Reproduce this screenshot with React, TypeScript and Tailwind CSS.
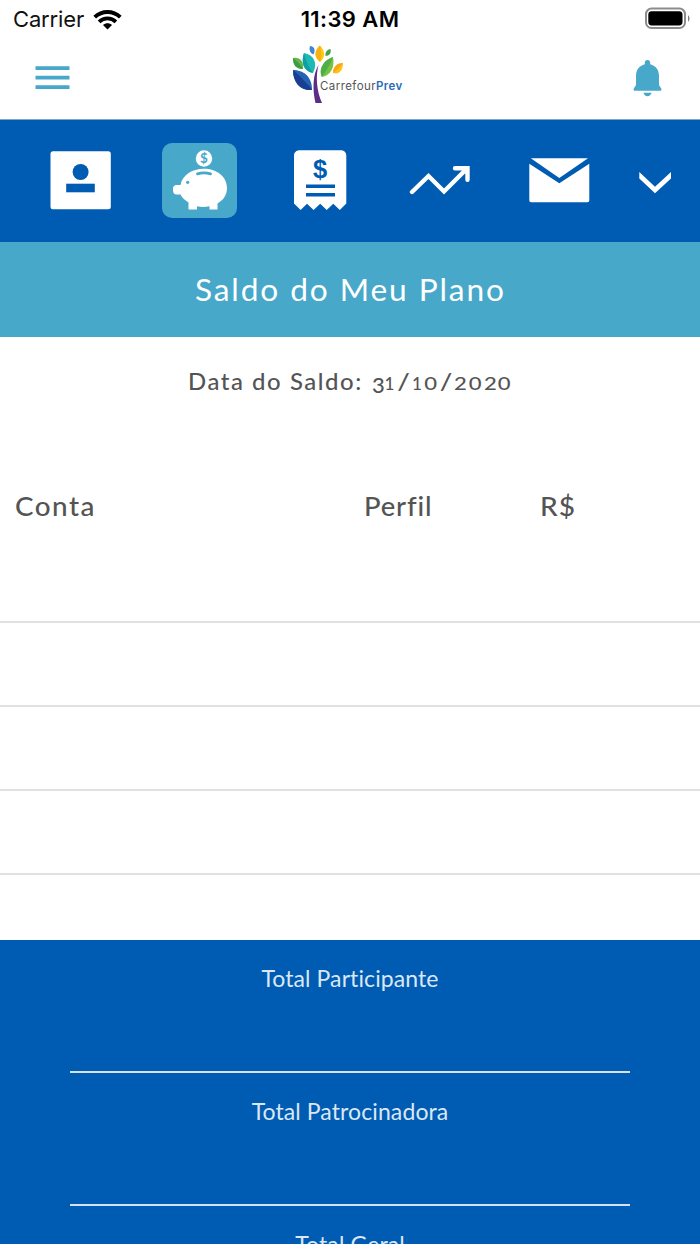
import React from "react";

function Tree() {
  return (
    <svg className="h-[60px] w-[54px] shrink-0" viewBox="291 45 54 60">
      <path d="M293 70C303 70 312 76 312 90C301 91 293 83 293 70Z" fill="#2462b4" />
      <path d="M293 70C301 77 308 84 312 90C301 91 293 83 293 70Z" fill="#183f92" />
      <path d="M293 58C300 57 304 61 303 69C296 69 293 65 293 58Z" fill="#67b849" />
      <path d="M293 58C298 62 301 65 303 69C296 69 293 65 293 58Z" fill="#3d9d45" />
      <path d="M304 53C314 55 318 63 313 73C303 71 301 62 304 53Z" fill="#1cbab2" />
      <path d="M304 53C306 61 309 68 313 73C303 71 301 62 304 53Z" fill="#0f9fa4" />
      <path d="M310 46C314 46 316 50 313.500 54.500C309.500 53 309 49 310 46Z" fill="#3f86d2" />
      <path d="M320 45.500C325 51 326 57 320 62C314 57 314 51 320 45.500Z" fill="#ffc90e" />
      <path d="M320 45.500C321 52 322 57 320 62C314 57 314 51 320 45.500Z" fill="#f9b015" />
      <path d="M330.500 49C331.500 53 329.500 56 325.500 56C325 52 327 49.500 330.500 49Z" fill="#45a548" />
      <path d="M333 57C335 67 331 75 322 77C318 69 324 60 333 57Z" fill="#79c143" />
      <path d="M333 57C330 65 326 71 322 77C318 69 324 60 333 57Z" fill="#4fae48" />
      <path d="M343 63C343 70 339 75 333 73C333 67 337 63 343 63Z" fill="#ffc20e" />
      <path d="M343 63C340 67 337 70 333 73C333 67 337 63 343 63Z" fill="#f6a81c" />
      <path d="M318.500 65C315.500 76 316.500 91 322 103H315.500C312.500 90 312.500 75 318.500 65Z" fill="#5b2d86" />
    </svg>
  );
}

function StatusBar() {
  return (
    <div className="flex h-[40px] shrink-0 items-start font-[Inter,sans-serif]">
      <div className="flex w-[240px] items-center gap-[9px] pl-[13px]">
        <span className="text-[22px] leading-[39px] tracking-[-0.15px] text-[#111]">Carrier</span>
        <svg className="h-[22px] w-[29px]" viewBox="0 0 29 22">
          <g fill="none" stroke="#000" strokeWidth="3.900">
            <path d="M1.700 8.200C9 1.300 20 1.300 27.300 8.200" />
            <path d="M6.100 12.800C11 8.200 18 8.200 22.900 12.800" />
          </g>
          <path d="M10 16C12.500 13.700 16.500 13.700 19 16L14.500 20.600Z" />
        </svg>
      </div>
      <div className="w-[220px] text-center text-[22px] font-semibold leading-[39px] tracking-[0.4px] text-black">11:39 AM</div>
      <div className="flex w-[240px] justify-end pr-[10px] pt-[7px]">
        <svg className="h-[22px] w-[46px]" viewBox="644 7 46 22">
          <rect x="646" y="8.600" width="39" height="19.400" rx="5.500" fill="none" stroke="#8c8c8c" strokeWidth="2" />
          <rect x="648.300" y="11.200" width="34.200" height="14.200" rx="3.400" />
          <path d="M688 15C690 17 690 20 688 22Z" fill="#777" />
        </svg>
      </div>
    </div>
  );
}

function Header() {
  return (
    <header className="flex h-[79px] shrink-0 items-start pl-[35px]">
      <svg className="mt-[26px] h-[24px] w-[35px]" viewBox="35 66 35 24" fill="#48a8ca">
        <path d="M35.500 66.200h34v3.700h-34zM35.500 75.800h34v3.700h-34zM35.500 85.200h34v3.700h-34z" />
      </svg>
      <div className="ml-[221px] flex w-[120px] items-start pt-[5px]">
        <Tree />
        <span className="-ml-[25px] mt-[34px] whitespace-nowrap font-[Inter,sans-serif] text-[11.500px] leading-[15px] tracking-[0.42px] text-[#555]">
          Carrefour<span className="font-semibold text-[#2a6cb8]">Prev</span>
        </span>
      </div>
      <svg className="ml-[221px] mt-[19px] h-[38px] w-[30px]" viewBox="632 59 30 38" fill="#48a8ca">
        <path d="M644.800 62.800a2.700 2.700 0 0 1 5.400 0v1.500C656 66 659 70 659 76V84.500C659 86.500 661.500 87.500 661.500 90A1.500 1.500 0 0 1 660.500 90.800H634.500A1.500 1.500 0 0 1 633.500 90C633.500 87.500 636 86.500 636 84.500V76C636 70 639 66 644.800 64.300Z" />
        <path d="M643.500 92.800H651.500C651 95 649.500 96.200 647.500 96.200S644 95 643.500 92.800Z" />
      </svg>
    </header>
  );
}

function Nav() {
  return (
    <nav className="flex h-[123px] shrink-0 items-center border-t border-[#7fa4cd] bg-[#005bb3] pb-px pl-[50px] pr-[28px]">
      <svg className="mb-[2px] h-[60px] w-[61px]" viewBox="50 150 61 60">
        <rect x="50.500" y="151.300" width="60.300" height="58" rx="2.500" fill="#fff" />
        <circle cx="80.600" cy="172" r="8" fill="#005bb3" />
        <path d="M66.200 183.700h28.600v8.600H66.200z" fill="#005bb3" />
      </svg>
      <div className="ml-[51px] h-[75px] w-[75px] rounded-[10px] bg-[#48a8ca]">
        <svg className="h-[75px] w-[75px]" viewBox="162 143 75 75">
          <circle cx="204" cy="158.500" r="8.200" fill="#fff" />
          <text x="204" y="163.300" textAnchor="middle" fontSize="13.500" fontWeight="700" fill="#48a8ca" fontFamily="Lato, sans-serif">$</text>
          <path d="M204 168.800C217 168.800 227 177 227 188C227 195 223.500 200 217.500 203.500V209.500H209.500V206.300Q203 207.500 197 206.300V209.500H188.500V202.500C184.500 200 182 197.500 180.500 194.500H176.500C174.300 194.500 173 193 173 190V188.500C173 186.200 174.500 185 176.500 185H180.500C182 175.500 192 168.800 204 168.800Z" fill="#fff" />
          <path d="M197.500 173.800Q204 172 210.500 173.800" fill="none" stroke="#48a8ca" strokeWidth="2.800" strokeLinecap="round" />
          <circle cx="187.700" cy="182.300" r="1.600" fill="#48a8ca" />
        </svg>
      </div>
      <svg className="mb-[2px] ml-[57px] h-[62px] w-[53px]" viewBox="294 149 53 62">
        <path d="M299.500 150.300H341C344 150.300 346.300 152.500 346.300 155.500V203.500L339.800 210L333.300 203.800L326.700 210L320.200 203.800L313.600 210L307 203.800L300.600 210L294 203.500V155.500C294 152.500 296.500 150.300 299.500 150.300Z" fill="#fff" />
        <text x="320.200" y="178" textAnchor="middle" fontSize="25.500" fontWeight="700" fill="#005bb3" fontFamily="Liberation Sans, sans-serif">$</text>
        <path d="M306 184.600h29v3.500h-29zM306 193h29v3.500h-29z" fill="#005bb3" />
      </svg>
      <svg className="ml-[62px] h-[32px] w-[62px]" viewBox="409 165 62 32" fill="none" stroke="#fff" strokeWidth="4.400" strokeLinecap="round" strokeLinejoin="miter">
        <path d="M412 192L428.500 176L444 191.500L465.500 170M455 168.300H467.500V179.700" />
      </svg>
      <svg className="ml-[57px] h-[45px] w-[62px]" viewBox="528 158 62 45" fill="#fff">
        <path d="M530.800 158.200H588L559.300 178Z" />
        <path d="M529.300 163.800L559.300 183.200L589.300 163.800V200.500Q589.300 202.300 587.500 202.300H531Q529.300 202.300 529.300 200.500Z" />
      </svg>
      <svg className="ml-[49px] mt-[4px] h-[22px] w-[33px]" viewBox="639 172 33 22">
        <path d="M639.300 172L655 186.800L671 172V178.500L655 193.300L639.300 178.500Z" fill="#fff" />
      </svg>
    </nav>
  );
}

const small = "scale-x-[1.3] text-[17px] font-medium text-center";

function BalanceDate() {
  return (
    <div className="flex h-[91px] shrink-0 items-baseline whitespace-nowrap pl-[188px] text-[23px] font-medium leading-[89px]">
      <span className="w-[184px] origin-left scale-x-[1.04] tracking-[1.5px]">Data do Saldo:</span>
      <span className="w-[12.5px] translate-y-[3px] text-[22px]">3</span>
      <span className="w-[10px] text-center text-[17px]">1</span>
      <span className="w-[17px] scale-x-[1.2] text-center">/</span>
      <span className="w-[11px] text-center text-[17px]">1</span>
      <span className={"w-[15.5px] " + small}>0</span>
      <span className="w-[16px] scale-x-[1.2] text-center">/</span>
      <span className={"w-[13px] " + small}>2</span>
      <span className={"w-[16.5px] " + small}>0</span>
      <span className={"w-[13px] " + small}>2</span>
      <span className={"w-[14.5px] " + small}>0</span>
    </div>
  );
}

function Total({ label, last }: { label: string; last?: boolean }) {
  return (
    <div className={last ? "mx-[70px] h-[133px]" : "mx-[70px] h-[133px] border-b-2 border-[#d3e2f1]"}>
      <div className="pt-[22px] text-center text-[23px] leading-[32px] tracking-[0.1px] text-[#dbe8f4] [font-variant-ligatures:none]">{label}</div>
    </div>
  );
}

export default function App() {
  return (
    <div className="flex h-[1244px] w-[700px] flex-col overflow-hidden bg-white font-[Lato,sans-serif] text-[#545454]">
      <StatusBar />
      <Header />
      <Nav />
      <h1 className="h-[95px] shrink-0 bg-[#48a8ca] text-center text-[30px] leading-[95px] tracking-[1.8px] text-white">
        <span className="inline-block scale-x-[1.055]">Saldo do Meu Plano</span>
      </h1>
      <BalanceDate />
      <div className="flex h-[193px] shrink-0 pl-[15px] pt-[58px] text-[26px] font-medium leading-[40px]">
        <span className="w-[349px] origin-left scale-x-[1.07] tracking-[1.4px]">Conta</span>
        <span className="w-[176px] origin-left scale-x-[1.055] tracking-[0.8px]">Perfil</span>
        <span className="origin-left scale-x-[1.08] tracking-[1px]">R$</span>
      </div>
      <div className="shrink-0">
        <div className="h-[84px] border-t-2 border-[#e0e1e1]" />
        <div className="h-[84px] border-t-2 border-[#e0e1e1]" />
        <div className="h-[84px] border-t-2 border-[#e0e1e1]" />
        <div className="h-[67px] border-t-2 border-[#e0e1e1]" />
      </div>
      <section className="shrink-0 bg-[#005bb3]">
        <Total label="Total Participante" />
        <Total label="Total Patrocinadora" />
        <Total label="Total Geral" last />
      </section>
    </div>
  );
}
